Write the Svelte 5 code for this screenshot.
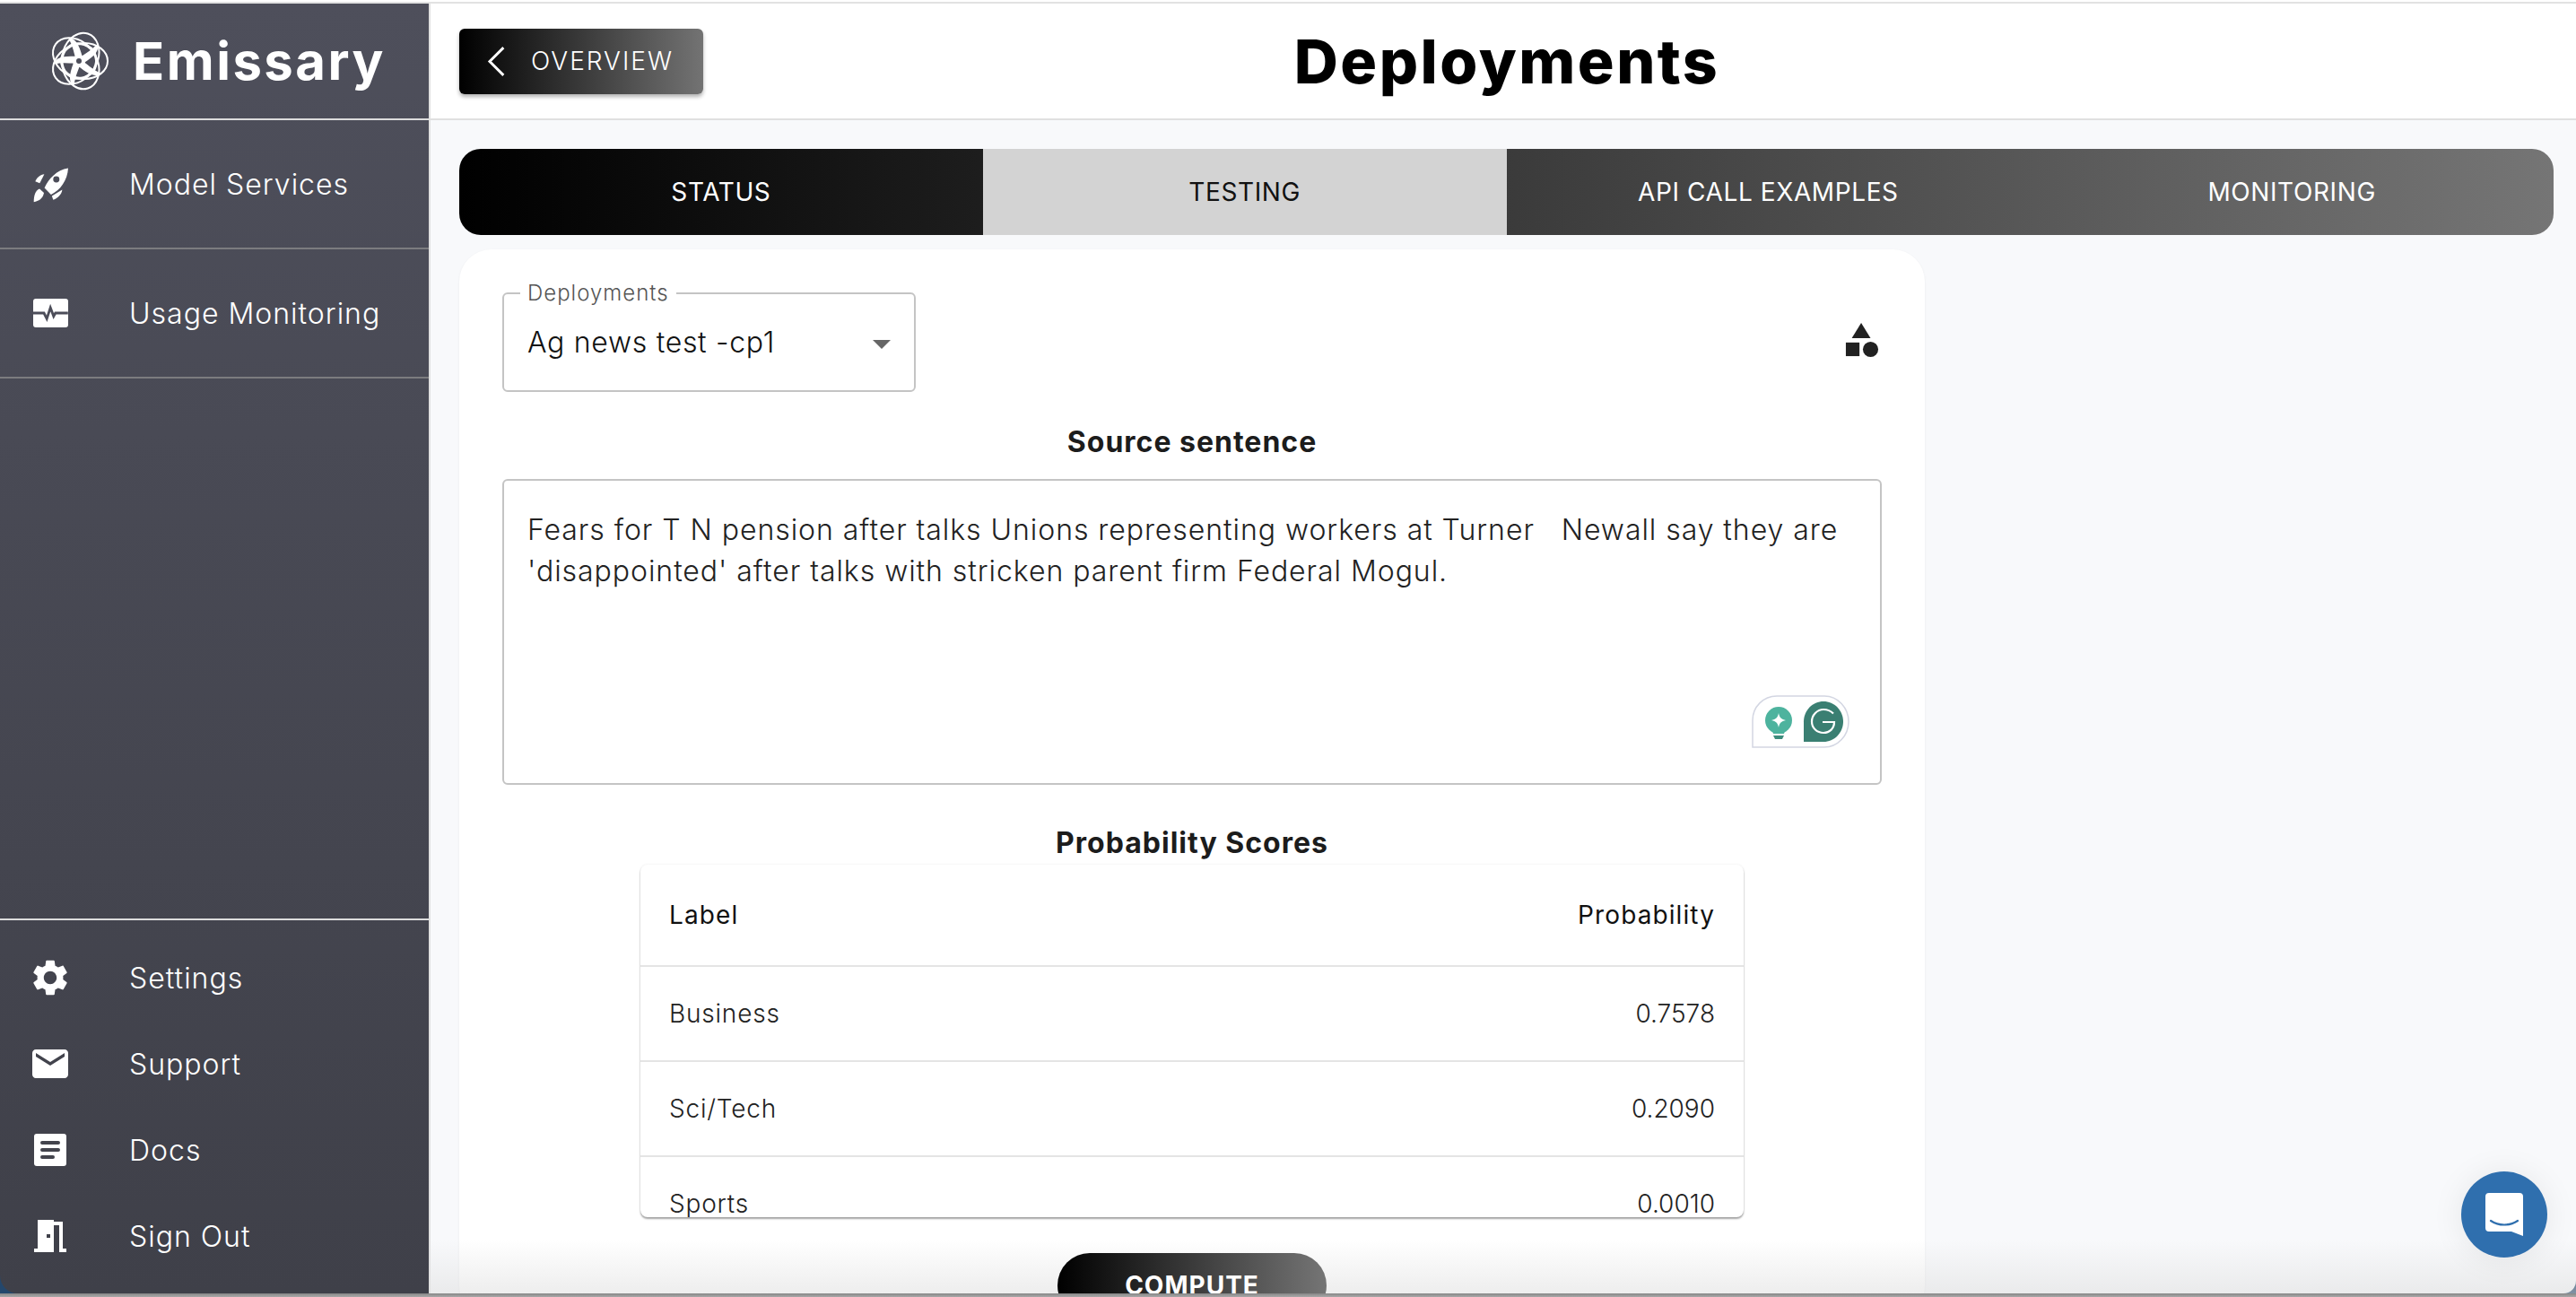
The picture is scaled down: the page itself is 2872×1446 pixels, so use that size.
<script lang="ts">
  const topNav = [
    { label: 'Model Services', icon: 'rocket' },
    { label: 'Usage Monitoring', icon: 'pulse' }
  ];
  const bottomNav = [
    { label: 'Settings', icon: 'gear' },
    { label: 'Support', icon: 'mail' },
    { label: 'Docs', icon: 'doc' },
    { label: 'Sign Out', icon: 'door' }
  ];
  const tabs = ['STATUS', 'TESTING', 'API CALL EXAMPLES', 'MONITORING'];
  const scores = [
    { label: 'Business', value: '0.7578' },
    { label: 'Sci/Tech', value: '0.2090' },
    { label: 'Sports', value: '0.0010' },
    { label: 'World', value: '0.0322' }
  ];
  const petals = [0, 72, 144, 216, 288];
</script>

{#snippet navIcon(name)}
  <svg class="nav-icon" viewBox="0 0 24 24" fill="#fff" aria-hidden="true">
    {#if name === 'rocket'}
      <g transform="translate(1 1) scale(.917)">
        <path fill-rule="evenodd" d="M22.900 2.500C16 3.500 11 9 8.500 14.500l4 4C18 16 22.500 10 22.900 2.500zM15.700 7.400a1.900 1.900 0 1 1 0 3.800 1.900 1.900 0 0 1 0-3.800z" />
        <path d="M2.900 10.500C4 8 6 6.500 8.400 6.200l-2.800 5.400z" />
        <path d="M8.200 17.500C7.500 21 5 22.600 2 23c0-4 1-7 3.500-8z" />
        <path d="M19.300 15.500C19 18 17 20.500 13.800 21.700l-.8-2.400z" />
      </g>
    {:else if name === 'pulse'}
      <rect x="2.500" y="4" width="19.500" height="16" rx="1.500" />
      <path d="M2.500 12h6l1.600 3.200 2-6.200 1.800 4.800 1-1.800h7" fill="none" stroke="#4c4d59" stroke-width="1.400" />
    {:else if name === 'gear'}
      <path d="M19.140 12.940c.04-.3.06-.61.06-.94 0-.32-.02-.64-.07-.94l2.030-1.580c.18-.14.23-.41.12-.61l-1.920-3.320c-.12-.22-.37-.29-.59-.22l-2.390.96c-.5-.38-1.030-.7-1.620-.94l-.36-2.540c-.04-.24-.24-.41-.48-.41h-3.840c-.24 0-.43.17-.47.41l-.36 2.540c-.59.24-1.130.57-1.620.94l-2.390-.96c-.22-.08-.47 0-.59.22L2.740 8.870c-.12.21-.08.47.12.61l2.030 1.580c-.05.3-.09.63-.09.94s.02.64.07.94l-2.030 1.580c-.18.14-.23.41-.12.61l1.920 3.320c.12.22.37.29.59.22l2.390-.96c.5.38 1.030.7 1.620.94l.36 2.540c.05.24.24.41.48.41h3.840c.24 0 .44-.17.47-.41l.36-2.540c.59-.24 1.130-.56 1.620-.94l2.390.96c.22.08.47 0 .59-.22l1.920-3.320c.12-.22.07-.47-.12-.61l-2.010-1.580zM12 15.600c-1.980 0-3.600-1.620-3.600-3.600s1.620-3.600 3.600-3.600 3.600 1.620 3.600 3.600-1.620 3.600-3.600 3.600z" />
    {:else if name === 'mail'}
      <path d="M20 4H4c-1.100 0-1.990.9-1.990 2L2 18c0 1.100.9 2 2 2h16c1.100 0 2-.9 2-2V6c0-1.100-.9-2-2-2zm0 4l-8 5-8-5V6l8 5 8-5v2z" />
    {:else if name === 'doc'}
      <rect x="3" y="3" width="18" height="18" rx="1.500" />
      <path d="M7.500 8h9M7.500 12h9M7.500 16h6" fill="none" stroke="#43444d" stroke-width="2" stroke-linecap="round" />
    {:else}
      <path d="M14 6v15H3v-2h2V3h9v1h5v15h2v2h-4V6h-3zm-4 5v2h2v-2h-2z" />
    {/if}
  </svg>
{/snippet}

<div class="window">
  <aside class="sidebar">
    <div class="brand">
      <svg class="logo" viewBox="-34 -34 68 68" aria-hidden="true">
        {#each petals as angle}
          <g transform="rotate({angle})">
            <ellipse cx="6" cy="0" rx="26" ry="20" fill="none" stroke="#fff" stroke-width="2" />
            <path d="M-4-4C-6-11-7-17-12-26C-5-26 0-20 4-4z" fill="#fff" />
          </g>
        {/each}
        <circle r="7" fill="#fff" />
        <circle r="3" fill="#4e4f5b" />
      </svg>
      <span>Emissary</span>
    </div>
    <nav class="nav-top">
      {#each topNav as item}
        <div class="nav-row tall">
          {@render navIcon(item.icon)}
          <span>{item.label}</span>
        </div>
      {/each}
    </nav>
    <nav class="nav-bottom">
      {#each bottomNav as item}
        <div class="nav-row">
          {@render navIcon(item.icon)}
          <span>{item.label}</span>
        </div>
      {/each}
    </nav>
  </aside>

  <main class="main">
    <header class="topbar">
      <button class="back">
        <svg viewBox="0 0 24 24" fill="none" stroke="#fff" stroke-width="1.700" aria-hidden="true"><path d="M16 3 7 12l9 9" /></svg>
        OVERVIEW
      </button>
      <h1>Deployments</h1>
    </header>

    <div class="content">
      <div class="tabs">
        {#each tabs as tab, i}
          <div class="tab" class:active={i === 1}>{tab}</div>
        {/each}
      </div>

      <section class="card">
        <div class="card-top">
          <fieldset class="select">
            <legend>Deployments</legend>
            <span>Ag news test -cp1</span>
            <i class="caret"></i>
          </fieldset>
          <svg class="shapes" viewBox="3 2 19 20" fill="#212121" aria-hidden="true">
            <path d="M12 2l-5.500 9h11z" />
            <circle cx="17.500" cy="17.500" r="4.500" />
            <path d="M3 13.500h8v8H3z" />
          </svg>
        </div>

        <h2 class="source-title">Source sentence</h2>
        <div class="textarea">
          <p>Fears for T N pension after talks Unions representing workers at Turner &nbsp; Newall say they are 'disappointed' after talks with stricken parent firm Federal Mogul.</p>
          <div class="grammarly">
            <svg viewBox="0 0 109 59" aria-hidden="true">
              <path d="M1 58V28C1 13 13 1 28 1h53c15 0 27 13 27 28.500S96 58 81 58z" fill="#fff" stroke="#d3d6e2" stroke-width="1.500" />
              <circle cx="30" cy="28" r="15" fill="#4db39e" />
              <path d="M22 37h16l-2 6H24z" fill="#4db39e" />
              <path d="M24 45h12l-2 4h-8z" fill="#3d8c7c" />
              <path d="M30 20c1 5 3 7 8 8-5 1-7 3-8 8-1-5-3-7-8-8 5-1 7-3 8-8z" fill="#fff" />
              <path d="M58 52V29.500C58 17 68 7 80 7s22 10 22 22.500S92 52 80 52z" fill="#3a7f72" />
              <path d="M91 20.500c-3-3-7-4.500-11-4.500-7 0-13 6-13 13.500S73 42 80 42s12-5 12-12H79" fill="none" stroke="#fff" stroke-width="2.200" />
            </svg>
          </div>
        </div>

        <h2 class="scores-title">Probability Scores</h2>
        <div class="table-wrap">
          <table>
            <thead>
              <tr><th>Label</th><th class="num">Probability</th></tr>
            </thead>
            <tbody>
              {#each scores as row}
                <tr><td>{row.label}</td><td class="num">{row.value}</td></tr>
              {/each}
            </tbody>
          </table>
        </div>

        <div class="actions">
          <button class="compute">COMPUTE</button>
        </div>
      </section>
    </div>
  </main>

  <button class="chat" aria-label="Open chat">
    <svg viewBox="0 0 42 48" aria-hidden="true">
      <path d="M4 0h34a4 4 0 0 1 4 4v44l-13-5H4a4 4 0 0 1-4-4V4a4 4 0 0 1 4-4z" fill="#fff" />
      <path d="M6 31c9 6 21 6 30 0" fill="none" stroke="#2f6fae" stroke-width="2.200" stroke-linecap="round" />
    </svg>
  </button>
  <div class="fade"></div>
  <div class="window-edge"></div>
</div>

<style>
  :global(body) {
    margin: 0;
    background: #fff;
  }

  .window {
    position: relative;
    width: 2872px;
    height: 1446px;
    overflow: hidden;
    display: flex;
    box-sizing: border-box;
    padding-top: 4px;
    background: linear-gradient(180deg, #fff 50%, #24476c 50%);
    font-family: Inter, 'Liberation Sans', sans-serif;
    color: #212121;
  }

  .window::before {
    content: '';
    position: absolute;
    top: 2px;
    left: 0;
    right: 0;
    height: 2px;
    background: #e2e2e2;
  }

  .sidebar {
    width: 480px;
    box-sizing: border-box;
    flex: none;
    height: 1438px;
    display: flex;
    flex-direction: column;
    background: linear-gradient(180deg, #4e4f5b 0%, #3f4049 100%);
    border-right: 2px solid #e0e0e0;
    border-bottom-left-radius: 20px;
    color: #fff;
  }

  .brand {
    height: 130px;
    flex: none;
    box-sizing: border-box;
    border-bottom: 2px solid #dcdcdc;
    display: flex;
    align-items: center;
    gap: 26px;
    padding-left: 54px;
    font-size: 58px;
    font-weight: 700;
    letter-spacing: 2.5px;
  }

  .logo {
    width: 68px;
    height: 68px;
    flex: none;
  }

  .nav-top {
    flex: 1;
  }

  .nav-bottom {
    border-top: 2px solid #dcdcdc;
    padding: 16px 0;
  }

  .nav-row {
    height: 96px;
    box-sizing: border-box;
    display: flex;
    align-items: center;
    gap: 64px;
    padding-left: 32px;
    font-size: 32px;
    font-weight: 300;
    letter-spacing: 1px;
  }

  .nav-row.tall {
    height: 144px;
    border-bottom: 2px solid #7c7c7f;
  }

  .nav-icon {
    width: 48px;
    height: 48px;
    flex: none;
  }

  .main {
    flex: 1;
    min-width: 0;
    height: 1438px;
    overflow: hidden;
    background: #f8f9fb;
    border-bottom-right-radius: 14px;
    display: flex;
    flex-direction: column;
  }

  .topbar {
    height: 130px;
    flex: none;
    box-sizing: border-box;
    background: #fff;
    border-bottom: 2px solid #e0e0e0;
    display: flex;
    align-items: center;
    padding: 0 24px 0 32px;
  }

  .topbar h1 {
    flex: 1;
    margin: 0 0 0 -272px;
    text-align: center;
    font-size: 68px;
    font-weight: 800;
    letter-spacing: 2.5px;
    color: #000;
  }

  .back {
    width: 272px;
    height: 73px;
    flex: none;
    display: flex;
    align-items: center;
    gap: 17px;
    padding: 0 0 0 22px;
    border: 0;
    border-radius: 6px;
    background: linear-gradient(90deg, #000 0%, #737373 100%);
    box-shadow: 0 3px 4px rgba(0, 0, 0, 0.3);
    color: #fff;
    font-family: inherit;
    font-size: 28px;
    font-weight: 300;
    letter-spacing: 2px;
  }

  .back svg {
    width: 41px;
    height: 41px;
    flex: none;
  }

  .content {
    flex: 1;
    min-height: 0;
    padding: 32px 25px 0 32px;
  }

  .tabs {
    height: 96px;
    display: grid;
    grid-template-columns: repeat(4, 1fr);
    border-radius: 24px;
    overflow: hidden;
    background: linear-gradient(90deg, #000 0%, #757575 100%);
    color: #fff;
    font-size: 28px;
    font-weight: 400;
    letter-spacing: 0.6px;
  }

  .tab {
    display: flex;
    align-items: center;
    justify-content: center;
  }

  .tab.active {
    background: #d3d3d3;
    color: #111;
  }

  .card {
    width: 1634px;
    margin-top: 16px;
    box-sizing: border-box;
    padding: 34px 48px 0;
    background: #fff;
    border-radius: 36px;
    box-shadow: 0 1px 3px rgba(0, 0, 0, 0.06);
  }

  .card-top {
    display: flex;
    justify-content: space-between;
    align-items: center;
  }

  .select {
    position: relative;
    width: 461px;
    height: 125px;
    box-sizing: border-box;
    margin: 0;
    padding: 0 26px 14px;
    border: 2px solid #c4c4c4;
    border-radius: 6px;
    display: flex;
    align-items: center;
    font-size: 32px;
    font-weight: 300;
    letter-spacing: 0.7px;
    color: #111;
  }

  .select legend {
    padding: 0 8px;
    margin-left: -8px;
    font-size: 24px;
    font-weight: 300;
    letter-spacing: 1px;
    color: #555;
  }

  .caret {
    position: absolute;
    right: 26px;
    top: 38px;
    border: 10px solid transparent;
    border-top-color: #666;
    border-bottom: 0;
  }

  .shapes {
    width: 38px;
    height: 38px;
    margin: 8px 3px 0 0;
  }

  h2 {
    margin: 0;
    text-align: center;
    font-size: 32px;
    font-weight: 700;
    letter-spacing: 1px;
    color: #1c1c1c;
  }

  .source-title {
    margin-top: 36px;
    line-height: 40px;
  }

  .textarea {
    position: relative;
    height: 341px;
    margin-top: 21px;
    box-sizing: border-box;
    padding: 32px 26px;
    border: 2px solid #c4c4c4;
    border-radius: 6px;
  }

  .textarea p {
    margin: 0;
    font-size: 32px;
    font-weight: 300;
    letter-spacing: 0.95px;
    line-height: 46px;
    color: #222;
  }

  .grammarly {
    position: absolute;
    right: 34px;
    bottom: 39px;
    width: 109px;
    height: 59px;
  }

  .grammarly svg {
    display: block;
    width: 100%;
    height: 100%;
  }

  .scores-title {
    margin-top: 45px;
    line-height: 40px;
  }

  .table-wrap {
    width: 1230px;
    height: 393px;
    margin: 4px auto 0;
    overflow: hidden;
    border-radius: 8px;
    background: #fff;
    box-shadow: 0 2px 2px rgba(0, 0, 0, 0.35), 0 0 3px rgba(0, 0, 0, 0.08);
  }

  table {
    width: 100%;
    border-collapse: collapse;
    font-size: 28px;
  }

  th {
    height: 112px;
    padding: 0 32px;
    font-weight: 400;
    letter-spacing: 1.1px;
    text-align: left;
    color: #111;
  }

  td {
    height: 104px;
    padding: 0 32px;
    font-weight: 300;
    letter-spacing: 0.8px;
    color: #222;
    border-top: 2px solid #e4e4e4;
  }

  th.num,
  td.num {
    text-align: right;
  }

  td.num {
    letter-spacing: 0;
  }

  .actions {
    position: relative;
    z-index: 3;
    display: flex;
    justify-content: center;
    margin-top: 40px;
  }

  .compute {
    width: 300px;
    height: 72px;
    border: 0;
    border-radius: 36px;
    background: linear-gradient(90deg, #000 0%, #757575 100%);
    color: #fff;
    font-family: inherit;
    font-size: 28px;
    font-weight: 700;
    letter-spacing: 1px;
  }

  .chat {
    position: absolute;
    left: 2744px;
    top: 1306px;
    width: 96px;
    height: 96px;
    padding: 0;
    border: 0;
    border-radius: 50%;
    background: #2f6fae;
    display: flex;
    align-items: center;
    justify-content: center;
    box-shadow: 0 2px 36px rgba(0, 0, 0, 0.08);
    z-index: 3;
  }

  .chat svg {
    width: 42px;
    height: 48px;
  }

  .fade {
    position: absolute;
    left: 480px;
    right: 0;
    bottom: 4px;
    height: 60px;
    background: linear-gradient(180deg, rgba(220, 220, 220, 0), rgba(220, 220, 220, 0.5));
    pointer-events: none;
    z-index: 2;
  }

  .window-edge {
    position: absolute;
    left: 0;
    right: 0;
    bottom: 0;
    height: 4px;
    background: linear-gradient(180deg, #868686, #a8a8a8);
    z-index: 4;
  }
</style>
